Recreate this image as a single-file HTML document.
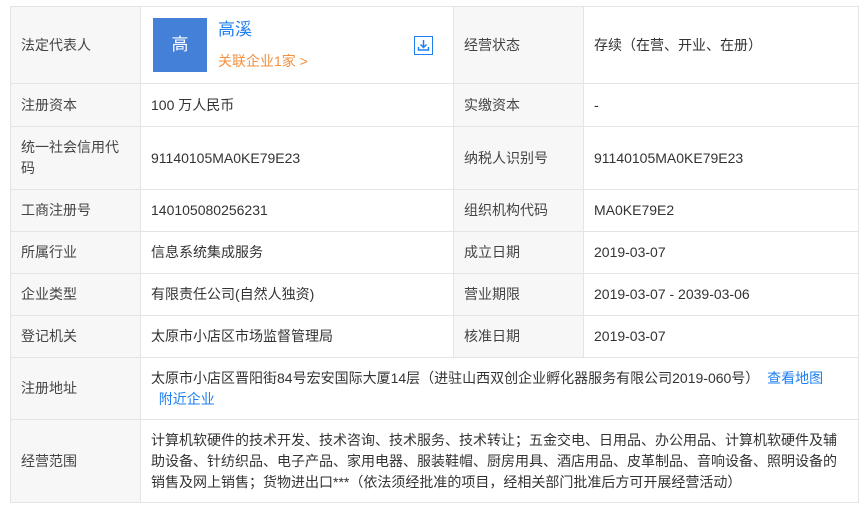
<!DOCTYPE html><html><head><meta charset="utf-8"><style>
body{margin:0;background:#fff;font-family:"Liberation Sans","Noto Sans CJK SC",sans-serif;font-size:14px;color:#333}
table{position:absolute;left:10px;top:6px;border-collapse:collapse;table-layout:fixed;width:848px}
td{border:1px solid #e4e4e4;padding:0 10px;vertical-align:middle;line-height:21px}
td.l{background:#f7f7f7;color:#444}
a{color:#1e7ff0;text-decoration:none}
</style></head><body>
<table>
<colgroup><col style="width:130px"><col style="width:313px"><col style="width:130px"><col style="width:275px"></colgroup>
<tr style="height:77px"><td class="l">法定代表人</td><td style="position:relative">
<div style="position:absolute;left:12px;top:11px;width:54px;height:54px;background:#4580d8;color:#fff;font-size:17px;line-height:54px;text-align:center">高</div>
<div style="position:absolute;left:77px;top:12px;font-size:17px;color:#1e7ff0">高溪</div>
<div style="position:absolute;left:77px;top:44px;color:#f5903d">关联企业1家 &gt;</div>
<div style="position:absolute;left:273px;top:29px;width:19px;height:19px;border:1px solid #1e7ff0;box-sizing:border-box"><svg width="17" height="17" viewBox="0 0 17 17"><path d="M8.5 3v7M5.5 7.5l3 3 3-3M3.5 10v3h10v-3" fill="none" stroke="#1e7ff0" stroke-width="1.5"/></svg></div>
</td><td class="l">经营状态</td><td>存续（在营、开业、在册）</td></tr>
<tr style="height:43px"><td class="l">注册资本</td><td>100 万人民币</td><td class="l">实缴资本</td><td>-</td></tr>
<tr style="height:63px"><td class="l">统一社会信用代码</td><td>91140105MA0KE79E23</td><td class="l">纳税人识别号</td><td>91140105MA0KE79E23</td></tr>
<tr style="height:42px"><td class="l">工商注册号</td><td>140105080256231</td><td class="l">组织机构代码</td><td>MA0KE79E2</td></tr>
<tr style="height:42px"><td class="l">所属行业</td><td>信息系统集成服务</td><td class="l">成立日期</td><td>2019-03-07</td></tr>
<tr style="height:42px"><td class="l">企业类型</td><td>有限责任公司(自然人独资)</td><td class="l">营业期限</td><td>2019-03-07 - 2039-03-06</td></tr>
<tr style="height:42px"><td class="l">登记机关</td><td>太原市小店区市场监督管理局</td><td class="l">核准日期</td><td>2019-03-07</td></tr>
<tr style="height:62px"><td class="l">注册地址</td><td colspan="3">太原市小店区晋阳街84号宏安国际大厦14层（进驻山西双创企业孵化器服务有限公司2019-060号） &nbsp;<a>查看地图</a><br>&nbsp; <a>附近企业</a></td></tr>
<tr style="height:83px"><td class="l">经营范围</td><td colspan="3">计算机软硬件的技术开发、技术咨询、技术服务、技术转让；五金交电、日用品、办公用品、计算机软硬件及辅助设备、针纺织品、电子产品、家用电器、服装鞋帽、厨房用具、酒店用品、皮革制品、音响设备、照明设备的销售及网上销售；货物进出口***（依法须经批准的项目，经相关部门批准后方可开展经营活动）</td></tr>
</table>
</body></html>
